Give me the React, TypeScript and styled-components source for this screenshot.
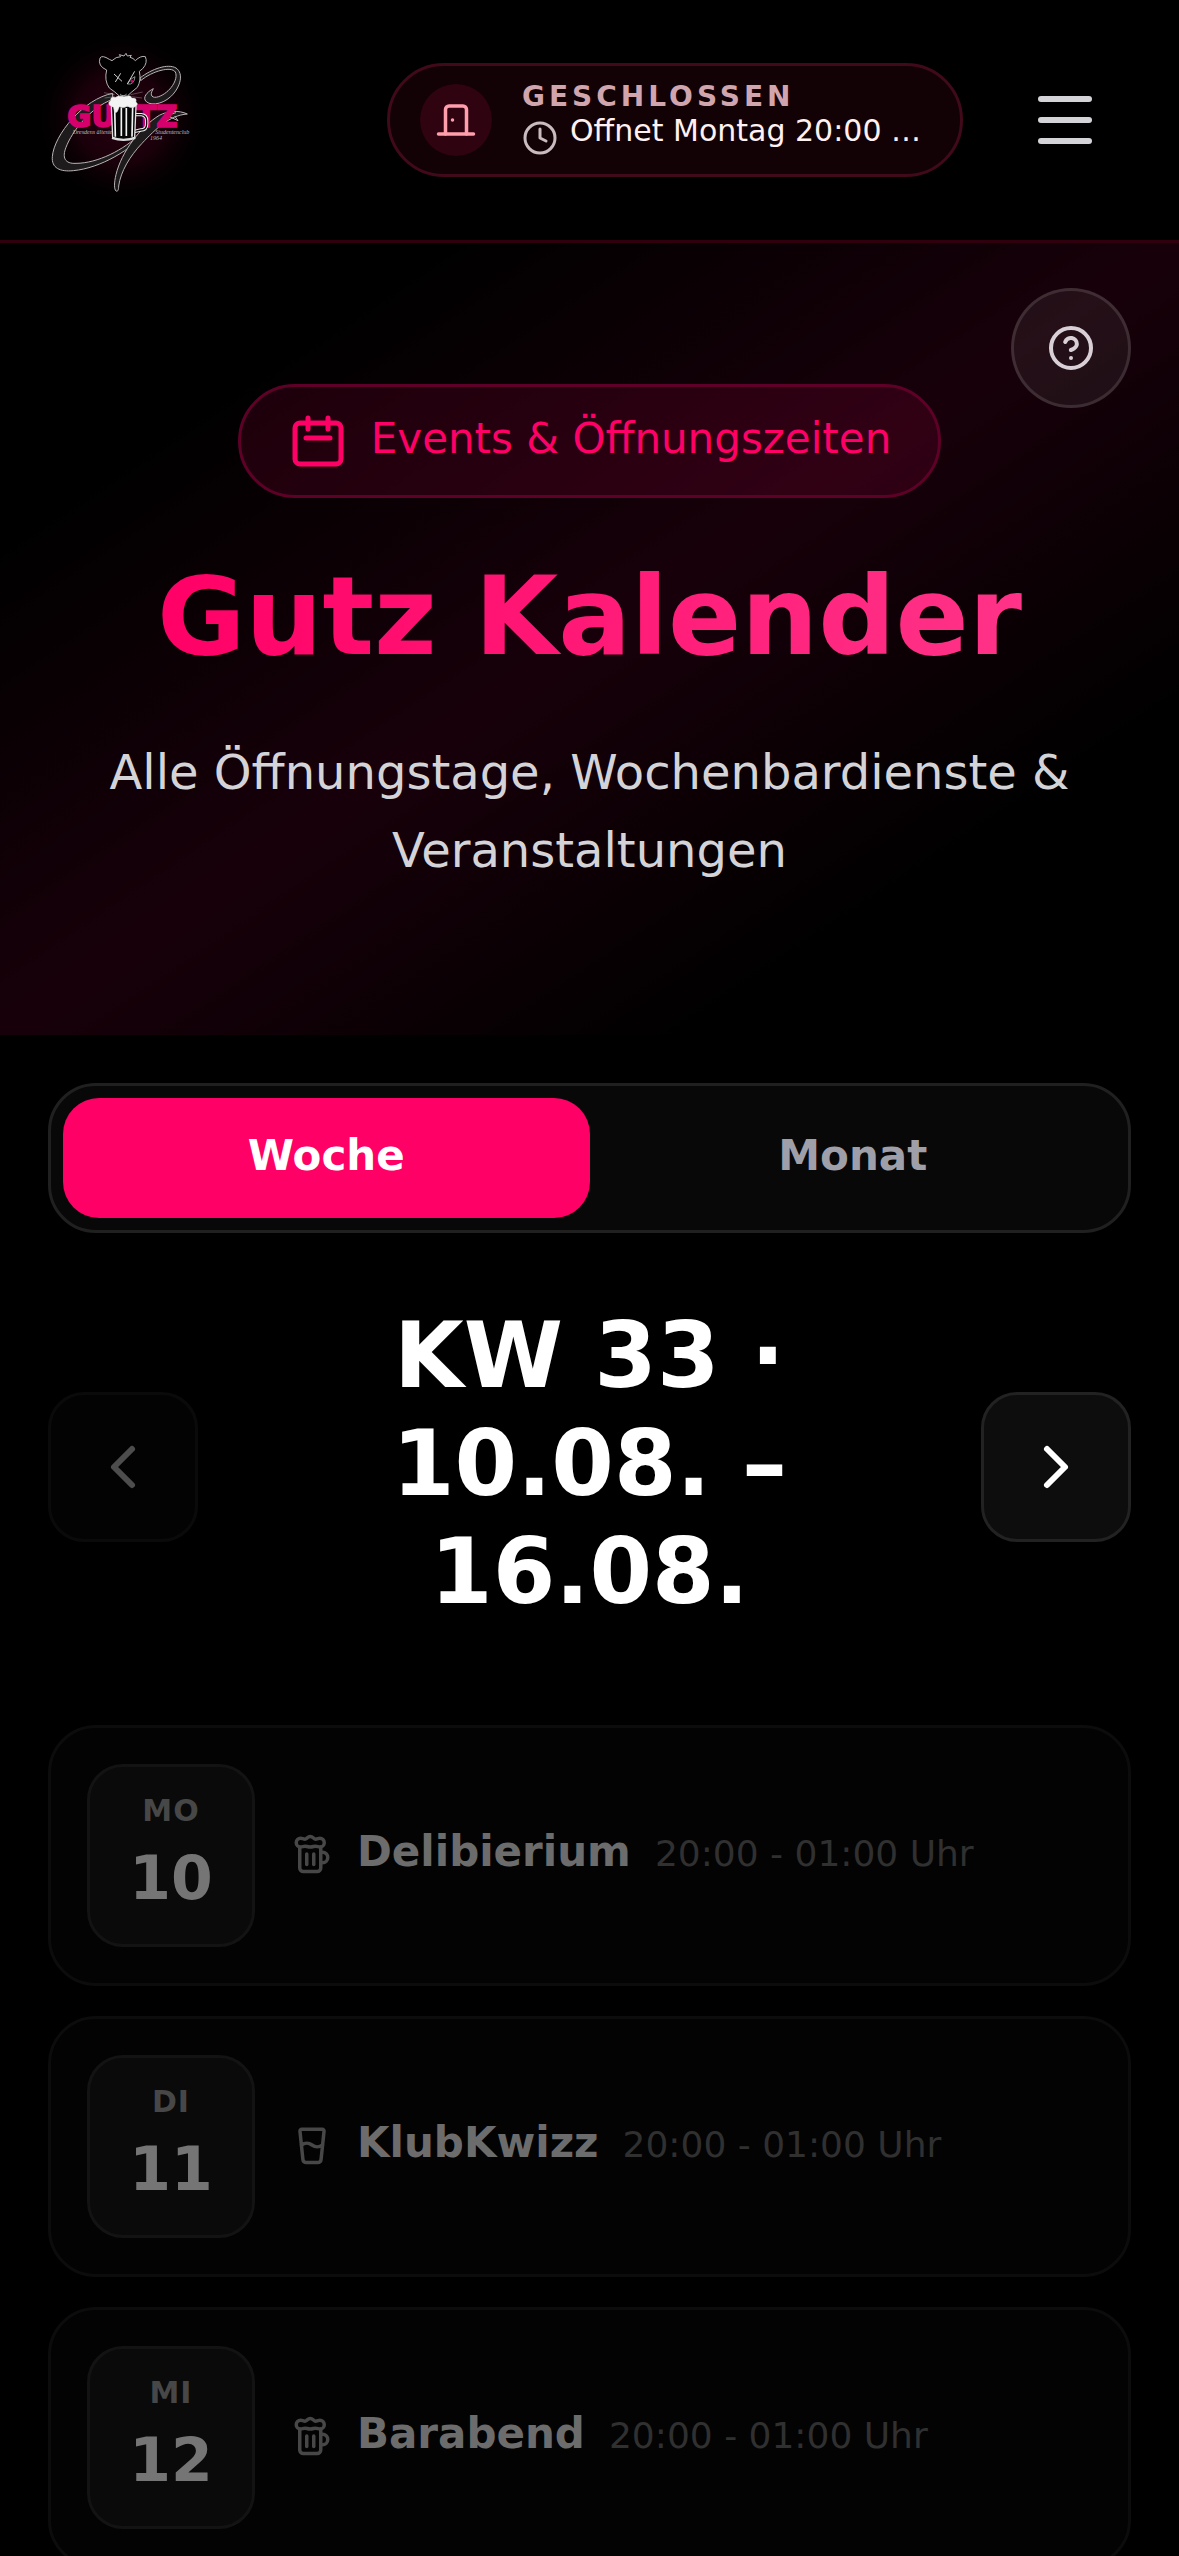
import React from "react";
import styled, { createGlobalStyle } from "styled-components";
import { DoorClosed, Clock, CircleHelp, ChevronLeft, ChevronRight, Beer, GlassWater } from "lucide-react";

const Global = createGlobalStyle`
  *, *::before, *::after { box-sizing: border-box; }
  body { margin: 0; background: #000; color: #fff; font-family: "DejaVu Sans", sans-serif; }
  button, h1, h2, p { margin: 0; font: inherit; color: inherit; }
  button { padding: 0; border: 0; background: none; cursor: pointer; }
  svg { display: block; flex: none; }
`;
const Page = styled.div`min-height: 100vh; overflow: hidden;`;
const Header = styled.header`
  display: flex; align-items: center; gap: 36px; padding: 48px;
  border-bottom: 3px solid #31000f;
`;
const Home = styled.a`
  display: block; margin-right: auto;
  svg { overflow: visible; }
`;
const Status = styled.button`
  display: flex; align-items: center; gap: 30px; width: 576px; height: 114px;
  padding: 0 30px; border: 3px solid #400a1b; border-radius: 57px; background: #130205; text-align: left;
`;
const Round = styled.span`
  display: grid; place-items: center; width: 72px; height: 72px; border-radius: 50%;
  background: #300310; color: #ff9fab;
`;
const StatusText = styled.span`display: flex; flex-direction: column; padding-bottom: 5px;`;
const State = styled.strong`font-size: 28px; line-height: 33px; letter-spacing: 4px; color: #d1a5ae;`;
const Next = styled.span`
  display: flex; align-items: flex-end; gap: 12px; height: 43px; font-size: 30px; line-height: 36px;
  white-space: nowrap; color: #fff1f2;
  svg { color: #c8bcc0; }
`;
const NextText = styled.span`align-self: flex-start;`;
const Menu = styled.button`
  display: flex; flex-direction: column; align-items: center; justify-content: center;
  gap: 15px; width: 132px; height: 132px;
`;
const Bar = styled.span`width: 54px; height: 6px; border-radius: 3px; background: #d4d4d8;`;

const Hero = styled.section`
  position: relative; display: flex; flex-direction: column; align-items: center;
  padding: 141px 96px 147px; text-align: center;
  background: linear-gradient(to bottom right, #000 18%, #18000a 50%, #000 80%);
`;
const Help = styled.button`
  position: absolute; top: 45px; right: 48px; display: grid; place-items: center;
  width: 120px; height: 120px; border: 3px solid rgba(255, 255, 255, .12); border-radius: 50%;
  background: rgba(255, 255, 255, .06); color: #d8d0d6;
`;
const Tag = styled.div`
  display: flex; align-items: center; gap: 23px; height: 114px; padding: 0 47px;
  border: 3px solid #5e0028; border-radius: 57px; font-size: 42px; line-height: 60px; color: #ff0066;
  background: rgba(255, 0, 102, .11);
`;
const TagText = styled.span`padding-bottom: 5px;`;
const Title = styled.h1`
  margin-top: 51px; font-size: 108px; line-height: 135px; font-weight: 700; color: transparent;
  background: linear-gradient(90deg, #ff0066, #ff3388); background-clip: text; -webkit-background-clip: text;
`;
const Lead = styled.p`margin-top: 49px; margin-bottom: -1px; font-size: 48px; line-height: 78px; color: #d4d4d8;`;

const Main = styled.main`padding: 48px;`;
const Tabs = styled.div`
  display: grid; grid-template-columns: 1fr 1fr; padding: 12px;
  border: 3px solid #202020; border-radius: 48px; background: #080808;
`;
const Tab = styled.button<{ $active?: boolean }>`
  height: 120px; padding-bottom: 6px; border-radius: 36px; font-size: 42px; font-weight: 700;
  color: ${(p) => (p.$active ? "#fff" : "#9f9fa9")};
  background: ${(p) => (p.$active ? "#ff0066" : "transparent")};
`;
const WeekNav = styled.div`display: flex; align-items: center; justify-content: space-between; gap: 48px; margin-top: 69px;`;
const Step = styled.button`
  display: grid; place-items: center; width: 150px; height: 150px; flex: none;
  border: 3px solid #222; border-radius: 36px; background: #0d0d0d; color: #fff;
  &:disabled { opacity: .3; cursor: default; }
`;
const Week = styled.h2`
  max-width: 480px; padding-bottom: 6px; font-size: 90px; line-height: 108px; font-weight: 700; text-align: center;
`;
const Days = styled.div`display: grid; gap: 30px; margin-top: 93px;`;
const Card = styled.article`
  display: flex; align-items: center; gap: 36px; padding: 36px;
  border: 3px solid #0c0c0c; border-radius: 48px; background: #030303;
`;
const DateTile = styled.div`
  width: 168px; padding: 21px 0; border: 3px solid #131313; border-radius: 36px;
  background: #0a0a0a; text-align: center; font-weight: 700;
`;
const Weekday = styled.div`font-size: 30px; line-height: 45px; letter-spacing: 1px; color: #474747;`;
const Day = styled.div`font-size: 60px; line-height: 90px; color: #757575;`;
const Event = styled.div`display: flex; align-items: center; gap: 24px; padding-bottom: 3px; color: #474747;`;
const Info = styled.div`display: flex; align-items: baseline; gap: 24px; padding-bottom: 3px; line-height: 63px;`;
const Name = styled.strong`font-size: 42px; color: #6c6c6c;`;
const Time = styled.span`font-size: 36px; color: #303030;`;

const LogoWord = styled.text`
  font: 900 88px "DejaVu Sans", sans-serif; fill: #d6006c; stroke: #d6006c; stroke-width: 5px;
`;
const LogoScript = styled.text`font: italic 18px "Liberation Serif", serif; fill: #bbb;`;

const Logo = () => (
  <svg width="144" height="144" viewBox="12 12 432 432" aria-hidden="true">
    <defs>
      <radialGradient id="glow">
        <stop offset="0" stopColor="#26000f" />
        <stop offset="0.5" stopColor="#1a000a" />
        <stop offset="1" stopColor="#000" stopOpacity="0" />
      </radialGradient>
    </defs>
    <circle cx="232" cy="222" r="270" fill="url(#glow)" />
    <g fill="#1d1b1c" stroke="#b9b3b6" strokeWidth="3" strokeLinejoin="round">
      <path d="M206 148C120 164 30 272 25 338C22 372 48 384 88 380C170 372 262 318 318 254L290 268C240 318 160 358 96 358C62 360 54 340 66 310C84 262 140 190 206 166Z" />
      <path d="M288 102C324 74 372 58 396 72C420 88 410 130 380 158C352 184 312 186 303 168C298 154 316 140 328 134C314 156 326 164 344 158C378 146 404 106 394 84C382 66 326 80 290 110Z" />
      <path d="M430 210C404 198 372 200 346 214C290 248 232 324 216 392C210 416 210 436 216 441C222 444 224 436 224 426C230 382 258 336 294 298C336 254 376 214 430 210Z" />
      <path d="M396 206L368 214L402 230L392 216" fill="none" />
    </g>
    <LogoWord x="70" y="249">GU</LogoWord>
    <LogoWord x="277" y="249">TZ</LogoWord>
    <LogoScript x="86" y="270">Dresdens ältester</LogoScript>
    <LogoScript x="334" y="270">Studentenclub</LogoScript>
    <LogoScript x="318" y="289">1964</LogoScript>
    <g fill="none" stroke="#ddd" strokeWidth="4">
      <path d="M272 212H292Q308 214 308 230V240Q308 258 290 258L272 262" stroke="#f0f0f0" strokeWidth="10" />
      <path d="M272 212H292Q308 214 308 230V240Q308 258 290 258L272 262" stroke="#111" strokeWidth="4" />
      <path d="M202 186L206 280Q238 292 272 280L276 186Z" fill="#050505" />
      <path d="M212 190L214 278M232 192V276M247 192V276M266 190L264 278" stroke="#f4f4f4" strokeWidth="5" />
      <path d="M204 282Q238 294 274 282" strokeWidth="6" />
    </g>
    <path d="M196 184Q190 174 200 170Q198 156 214 160Q228 150 240 158Q258 150 264 162Q280 160 276 174Q286 180 274 188Q262 196 250 186Q238 196 226 188Q220 210 212 206L208 190Z" fill="#f3f3f3" stroke="#aaa" strokeWidth="1" />
    <path d="M188 78Q160 66 168 42Q174 32 196 46L204 50Q216 38 230 38L226 32L240 36L246 28L250 36L262 34L258 40Q268 42 274 50Q290 34 304 38Q312 56 296 74L286 82Q292 110 280 130Q262 144 250 156H226Q214 144 196 132Q180 110 188 78Z" fill="#000" stroke="#b5b5b5" strokeWidth="3" strokeLinejoin="round" />
    <g fill="none" stroke="#d0d0d0" strokeWidth="3">
      <path d="M210 90L234 112M230 88L214 114M250 120L272 82" />
      <path d="M250 120Q270 124 273 98Q260 102 250 120Z" strokeWidth="2" />
      <path d="M212 152L180 146M212 158L182 162M260 152L296 144M262 158L294 162" strokeWidth="1" />
      <path d="M228 150Q238 160 248 150" strokeWidth="2" />
      <circle cx="264" cy="112" r="4" fill="#d6006c" stroke="none" />
    </g>
  </svg>
);

const CalendarIcon = () => (
  <svg width="60" height="60" viewBox="0 0 60 60" fill="none" stroke="currentColor" strokeWidth="5" strokeLinecap="round" aria-hidden="true">
    <rect x="7" y="12" width="46" height="41" rx="5" />
    <path d="M20 7V18M40 7V18M18 27H42" />
  </svg>
);

const DAYS = [
  { wd: "MO", day: 10, name: "Delibierium", icon: Beer },
  { wd: "DI", day: 11, name: "KlubKwizz", icon: GlassWater },
  { wd: "MI", day: 12, name: "Barabend", icon: Beer },
];

export default function App() {
  return (
    <Page>
      <Global />
      <Header>
        <Home href="#" aria-label="Gutz"><Logo /></Home>
        <Status>
          <Round><DoorClosed size={42} /></Round>
          <StatusText>
            <State>GESCHLOSSEN</State>
            <Next><Clock size={36} /><NextText>Offnet Montag 20:00 …</NextText></Next>
          </StatusText>
        </Status>
        <Menu aria-label="Menü"><Bar /><Bar /><Bar /></Menu>
      </Header>
      <Hero>
        <Help aria-label="Hilfe"><CircleHelp size={48} /></Help>
        <Tag><CalendarIcon /><TagText>Events &amp; Öffnungszeiten</TagText></Tag>
        <Title>Gutz Kalender</Title>
        <Lead>Alle Öffnungstage, Wochenbardienste &amp; Veranstaltungen</Lead>
      </Hero>
      <Main>
        <Tabs><Tab $active>Woche</Tab><Tab>Monat</Tab></Tabs>
        <WeekNav>
          <Step disabled aria-label="Vorherige Woche"><ChevronLeft size={72} /></Step>
          <Week>KW 33 · 10.08. – 16.08.</Week>
          <Step aria-label="Nächste Woche"><ChevronRight size={72} /></Step>
        </WeekNav>
        <Days>
          {DAYS.map(({ wd, day, name, icon: Icon }) => (
            <Card key={wd}>
              <DateTile><Weekday>{wd}</Weekday><Day>{day}</Day></DateTile>
              <Event><Icon size={42} /><Info><Name>{name}</Name><Time>20:00 - 01:00 Uhr</Time></Info></Event>
            </Card>
          ))}
        </Days>
      </Main>
    </Page>
  );
}
